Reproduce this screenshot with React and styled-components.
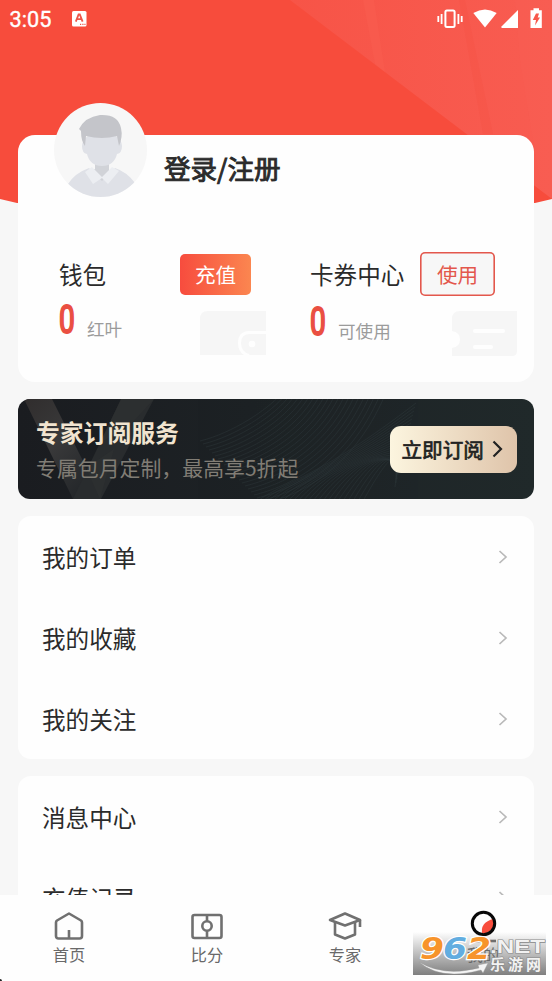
import React from 'react';
import styled, { createGlobalStyle, ThemeProvider } from 'styled-components';

const theme = {
  color: {
    red: '#f74c3c',
    text: '#2b2b2b',
    muted: '#9b9b9b',
    nav: '#696969',
    page: '#f7f7f7',
    card: '#fefefe',
  },
  font: "'Noto Sans CJK SC', 'Noto Sans', sans-serif",
};

const GlobalStyle = createGlobalStyle`
  * {
    box-sizing: border-box;
  }

  body {
    margin: 0;
    overflow: hidden;
  }
`;

const StyledScreen = styled.div`
  position: relative;
  display: flex;
  flex-direction: column;
  width: 552px;
  height: 981px;
  overflow: hidden;
  background: ${({ theme }) => theme.color.page};
  color: ${({ theme }) => theme.color.text};
  font-family: ${({ theme }) => theme.font};
`;

const StyledBackdrop = styled.svg`
  position: absolute;
  top: 0;
  left: 0;
`;

const StyledStatusBar = styled.div`
  position: relative;
  flex: none;
  display: flex;
  align-items: center;
  height: 38px;
  padding: 0 9px 0 9.5px;
  color: #fff;
`;

const StyledTime = styled.div`
  width: 62.5px;
  padding-top: 1px;
  font: 400 21.7px/38px Roboto, sans-serif;
  -webkit-text-stroke: 0.4px #fff;
`;

const StyledStatusIcons = styled.svg`
  margin-left: auto;
`;

const StyledContent = styled.div`
  position: relative;
  flex: 1;
  min-height: 0;
  display: flex;
  flex-direction: column;
  gap: 17px;
  padding: 97px 18px 0;
  overflow: hidden;
`;

const StyledCard = styled.div`
  flex: none;
  height: ${({ height }) => height}px;
  border-radius: ${({ radius }) => radius || 13}px;
  background: ${({ theme }) => theme.color.card};
`;

const StyledAccount = styled.div`
  display: flex;
  height: 94px;
  margin: -32px 0 55px;
  padding-left: 36px;
`;

const StyledAccountName = styled.div`
  margin: 45px 0 0 17px;
  font-size: 26.5px;
  font-weight: 400;
  line-height: 40px;
  -webkit-text-stroke: 0.9px ${({ theme }) => theme.color.text};
`;

const StyledPanels = styled.div`
  display: flex;
  gap: 44px;
  padding-left: 41px;
`;

const StyledPanel = styled.div`
  width: 207px;
`;

const StyledPanelHead = styled.div`
  display: flex;
  align-items: center;
  justify-content: space-between;
  height: 44px;
  padding-right: ${({ inset }) => inset}px;
  font-size: 23.6px;
  white-space: nowrap;
`;

const StyledButton = styled.button`
  display: flex;
  align-items: center;
  justify-content: center;
  width: ${({ outlined }) => (outlined ? 75 : 71)}px;
  height: ${({ outlined }) => (outlined ? 44 : 41)}px;
  padding: 0;
  border: 0;
  box-shadow: ${({ outlined }) => (outlined ? 'inset 0 0 0 1.6px #e3574c' : 'none')};
  border-radius: 5px;
  background: ${({ outlined }) => (outlined ? '#f7f7f7' : 'linear-gradient(90deg, #f74c3e, #fb8650)')};
  color: ${({ outlined }) => (outlined ? '#e3574c' : '#fff')};
  font: 400 20.6px/30px ${({ theme }) => theme.font};
`;

const StyledPanelBody = styled.div`
  display: flex;
  align-items: flex-start;
  height: 62px;
`;

const StyledCount = styled.div`
  width: 14px;
  height: 30px;
  margin-top: ${({ lowered }) => (lowered ? 10.5 : 9)}px;
  color: #ea4f42;
  font: 400 39px/30px Roboto, sans-serif;
  -webkit-text-stroke: 2px #ea4f42;
  transform: scaleX(0.72);
  transform-origin: 0 50%;
`;

const StyledUnit = styled.div`
  margin: ${({ lowered }) => (lowered ? 21.5 : 20)}px auto 0 14px;
  color: ${({ theme }) => theme.color.muted};
  font-size: 17.6px;
  line-height: 26px;
`;

const StyledPanelArt = styled.svg`
  flex: none;
  margin-top: 15px;
`;

const StyledBanner = styled.div`
  position: relative;
  flex: none;
  display: flex;
  align-items: center;
  justify-content: space-between;
  height: 100px;
  padding: 0 17px 0 18px;
  border-radius: 12px;
  overflow: hidden;
  background: linear-gradient(90deg, #1a1c20, #1d2225 45%, #20292a);
`;

const StyledBannerArt = styled.svg`
  position: absolute;
  top: 0;
  left: 0;
`;

const StyledBannerText = styled.div`
  position: relative;
  color: #817d75;
  font-size: 20.9px;
  line-height: 34px;
  white-space: nowrap;
`;

const StyledBannerTitle = styled.div`
  color: #f1e4d0;
  font-size: 23.8px;
  font-weight: 700;
  line-height: 36px;
`;

const StyledSubscribe = styled.button`
  position: relative;
  display: flex;
  align-items: center;
  gap: 8px;
  width: 127px;
  height: 47px;
  padding: 0 0 0 11.5px;
  border: 0;
  border-radius: 11px;
  background: linear-gradient(90deg, #fcf5df, #dfc4aa);
  color: #222;
  font: 400 20.6px/30px ${({ theme }) => theme.font};
  -webkit-text-stroke: 0.7px #222;
  white-space: nowrap;
`;

const StyledRow = styled.div`
  display: flex;
  align-items: center;
  justify-content: space-between;
  height: 81px;
  padding: 1px 26px 0 24px;
  font-size: 23.6px;
`;

const StyledNav = styled.div`
  position: relative;
  flex: none;
  display: flex;
  height: 86px;
  background: #fefefe;
`;

const StyledNavItem = styled.div`
  flex: 1;
  display: flex;
  flex-direction: column;
  align-items: center;
  padding-top: 15px;
  color: ${({ theme }) => theme.color.nav};
  font-size: 16.2px;
  line-height: 23px;
`;

const StyledWatermark = styled.div`
  position: absolute;
  right: 6px;
  bottom: 6px;
  width: 133px;
  height: 43px;
  background: linear-gradient(rgba(120, 120, 120, 0), rgba(105, 105, 105, 0.85));

  svg {
    display: block;
  }
`;

const StyledCorner = styled.div`
  position: absolute;
  left: 0;
  bottom: 0;
  width: 2px;
  height: 2px;
  border-radius: 0 2px 0 0;
  background: #222;
`;

const Backdrop = () => (
  <StyledBackdrop width="552" height="206" viewBox="0 0 552 206">
    <defs>
      <linearGradient id="shine" x1="0" y1="0" x2="1" y2="0">
        <stop offset="0" stopColor="#f75447" />
        <stop offset="1" stopColor="#f85c51" />
      </linearGradient>
    </defs>
    <path d="M0 0H552V199L535 203H17L0 199Z" fill="#f74c3c" />
    <path d="M290 0H552V199Z" fill="url(#shine)" />
    <path d="M363 0H374L385 72L375 64Z" fill="#f95d50" opacity=".5" />
    <path d="M459 0H465L493 134H483Z" fill="#f55245" opacity=".4" />
    <path d="M520 60L528 110L540 180H552V0H515Z" fill="#fa6055" opacity=".3" />
  </StyledBackdrop>
);

const StatusBar = () => (
  <StyledStatusBar>
    <StyledTime>3:05</StyledTime>
    <svg width="15" height="19" viewBox="0 0 15 19">
      <rect x="0" y="1" width="14.5" height="15.5" rx="1.5" fill="#fff" />
      <path d="M3.8 11.6 6.6 4.4H7.8L10.6 11.6M5 9.2H9.4" fill="none" stroke="#ee5549" strokeWidth="1.8" />
      <path d="M8 14.3H9.2M10.3 14.3H11.5M12.4 14.3H13.5" stroke="#ee5549" strokeWidth="1.3" />
    </svg>
    <StyledStatusIcons width="106" height="24" viewBox="0 0 106 24">
      <rect x="8.4" y="3.5" width="9.2" height="16.4" rx="1.5" fill="none" stroke="#fff" strokeWidth="2" />
      <path d="M1.3 9V15M4.6 7V17M21.4 7V17M24.7 9V15" stroke="#fff" strokeWidth="1.8" />
      <path d="M36.3 6Q48 -1 59.7 6L48 20.5Z" fill="#fff" />
      <path d="M81 3V21H64.5V19.5Z" fill="#fff" />
      <path d="M93.5 3.2H96.5V1.2H102V3.2H104.8V21H93.5Z" fill="#fff" />
      <path d="M99 6.5H102L100.7 10.5H103L98 18.5L99 13H95.8Z" fill="#f8584b" />
    </StyledStatusIcons>
  </StyledStatusBar>
);

const Avatar = () => (
  <svg width="93" height="94" viewBox="0 0 93 94">
    <defs>
      <clipPath id="face">
        <ellipse cx="46.5" cy="47" rx="46.5" ry="47" />
      </clipPath>
    </defs>
    <g clipPath="url(#face)">
      <path d="M0 0H93V94H0Z" fill="#f7f7f7" />
      <path d="M41 57H55V67L62 70L48 82L33 70L41 66Z" fill="#d1d3d8" />
      <path d="M14 81Q21 70 35 65L48 78L61 65Q73 69 81 80L75 96H18Z" fill="#dfe1e7" />
      <path d="M38 64L48 74L58 64L65 68L54 81L48 75L39 81L31 69Z" fill="#eceef2" />
      <path d="M28 43Q29 30 48 30Q67 30 68 43Q68 50 63 51Q60 63 48 63Q36 63 33 51Q28 50 28 43Z" fill="#dfe1e7" />
      <path d="M25 26Q31 14 46 12Q64 11 67 25Q69 34 65 43L63 33Q48 37 32 33L31 43Q27 38 27 28Z" fill="#c4c5ca" />
    </g>
  </svg>
);

const WalletArt = () => (
  <StyledPanelArt width="66" height="44" viewBox="0 0 66 44">
    <path d="M8 0H66V44H0V8Q0 0 8 0Z" fill="#f6f6f6" />
    <path d="M66 21.5H49Q39.5 22 39.5 32Q39.5 42 49 44.5" fill="none" stroke="#fefefe" strokeWidth="3" />
    <circle cx="52" cy="33" r="3.3" fill="#fefefe" />
  </StyledPanelArt>
);

const CouponArt = () => (
  <StyledPanelArt width="65" height="45" viewBox="0 0 65 45">
    <path d="M8 0H65V40Q65 45 60 45H0V37Q8 36 8 28.5Q8 21 0 20V8Q0 0 8 0Z" fill="#f6f6f6" />
    <path d="M23 20H51M23 36H39" stroke="#fefefe" strokeWidth="4" strokeLinecap="round" />
  </StyledPanelArt>
);

// flowing contour lines on the dark banner
const waves = Array.from({ length: 22 }, (_, i) => i);

const BannerArt = () => (
  <StyledBannerArt width="516" height="100" viewBox="0 0 516 100">
    <defs>
      <linearGradient id="ribbon" x1="0" y1="0" x2="0.7" y2="1">
        <stop offset="0" stopColor="#302d2d" />
        <stop offset="0.5" stopColor="#39393a" />
        <stop offset="1" stopColor="#24272a" />
      </linearGradient>
    </defs>
    <path d="M6 0H34L66 64L78 100H55Z" fill="url(#ribbon)" />
    <path d="M103 0H136L83 100H55Z" fill="#292c2e" />
    <path d="M103 0L82 44L113 25L136 0M68 69L96 50L82 100" fill="#303233" opacity=".45" />
    <g fill="none" stroke="#344043" strokeWidth=".6" opacity=".6">
      {waves.map((i) => (
        <path
          key={i}
          d={`M${182 + i * 3} ${42 + i * 3}C${215 + i * 3} ${34 + i * 3} ${250 + i * 4} ${10 + i * 3} ${262 + i * 5} -4`}
        />
      ))}
      {waves.map((i) => (
        <path
          key={i}
          d={`M${240 + i * 5} 102C${262 + i * 5} ${84 - i} ${300 + i * 4} ${80 - i * 2} ${398 - i} ${4 + i * 4}`}
        />
      ))}
    </g>
  </StyledBannerArt>
);

const Chevron = () => (
  <svg width="10" height="16" viewBox="0 0 10 16">
    <path d="M1.5 2L8 8L1.5 14" fill="none" stroke="#b9b9b9" strokeWidth="1.7" />
  </svg>
);

const MenuRow = ({ label }) => (
  <StyledRow>
    {label}
    <Chevron />
  </StyledRow>
);

const HomeIcon = () => (
  <g>
    <path d="M16 3.5L28 10.5Q29 11.2 29 12.5V26Q29 28.5 26.5 28.5H5.5Q3 28.5 3 26V12.5Q3 11.2 4 10.5Z" />
    <path d="M16 20V28" />
  </g>
);

const ScoreIcon = () => (
  <g>
    <rect x="1.5" y="5" width="29" height="23" rx="2" />
    <path d="M16 5V11M16 21V28" />
    <circle cx="16" cy="16" r="4.7" />
  </g>
);

const ExpertIcon = () => (
  <g>
    <path d="M1 10L16 3.5L31 10L16 15.5Z" />
    <path d="M6 12V24.5L16 28.5L26 24.5V12M31 10V17" />
  </g>
);

const MineIcon = () => (
  <g>
    <path d="M15.5 24.5Q12 13 27 8.5Q30 20 15.5 24.5Z" fill="#f84d3c" stroke="none" />
    <circle cx="16.5" cy="13.5" r="11.2" stroke="#080808" strokeWidth="3" />
    <path d="M4 31H29" />
  </g>
);

const NavItem = ({ label, icon: Icon }) => (
  <StyledNavItem>
    <svg
      width="34"
      height="33"
      viewBox="-1 0 34 33"
      fill="none"
      stroke="#707070"
      strokeWidth="2.6"
      strokeLinejoin="round"
    >
      <Icon />
    </svg>
    {label}
  </StyledNavItem>
);

const Watermark = () => (
  <StyledWatermark>
    <svg width="133" height="43" viewBox="0 0 133 43" overflow="visible">
      <g
        fontFamily="DejaVu Sans"
        fontWeight="700"
        fontStyle="italic"
        fontSize="31"
        stroke="#fff"
        strokeWidth="2.4"
        paintOrder="stroke"
      >
        <text x="7" y="26.5" textLength="24" lengthAdjust="spacingAndGlyphs" fill="#f7942b">9</text>
        <text x="30" y="26.5" textLength="24" lengthAdjust="spacingAndGlyphs" fill="#62ade0">6</text>
        <text x="54" y="26.5" textLength="24" lengthAdjust="spacingAndGlyphs" fill="#f7942b">2</text>
      </g>
      <path d="M6 30Q30 45 66 36L65 33L75 31L70 41L68 38Q28 49 6 30Z" fill="#f4f4f4" stroke="#999" strokeWidth=".4" />
      <g fill="#f2f2f2" stroke="#888" strokeWidth="1.2" paintOrder="stroke" fontWeight="700">
        <text x="77" y="21" fontFamily="Liberation Sans" fontSize="19" textLength="55" lengthAdjust="spacingAndGlyphs">
          .NET
        </text>
        <text x="77" y="38" fontFamily="Noto Sans CJK SC" fontSize="15" textLength="51">
          乐游网
        </text>
      </g>
    </svg>
  </StyledWatermark>
);

const App = () => (
  <ThemeProvider theme={theme}>
    <GlobalStyle />
    <StyledScreen>
      <Backdrop />
      <StatusBar />
      <StyledContent>
        <StyledCard height={247} radius={17}>
          <StyledAccount>
            <Avatar />
            <StyledAccountName>登录/注册</StyledAccountName>
          </StyledAccount>
          <StyledPanels>
            <StyledPanel>
              <StyledPanelHead inset={15}>
                钱包
                <StyledButton>充值</StyledButton>
              </StyledPanelHead>
              <StyledPanelBody>
                <StyledCount>0</StyledCount>
                <StyledUnit>红叶</StyledUnit>
                <WalletArt />
              </StyledPanelBody>
            </StyledPanel>
            <StyledPanel>
              <StyledPanelHead inset={22}>
                卡券中心
                <StyledButton outlined>使用</StyledButton>
              </StyledPanelHead>
              <StyledPanelBody>
                <StyledCount lowered>0</StyledCount>
                <StyledUnit lowered>可使用</StyledUnit>
                <CouponArt />
              </StyledPanelBody>
            </StyledPanel>
          </StyledPanels>
        </StyledCard>
        <StyledBanner>
          <BannerArt />
          <StyledBannerText>
            <StyledBannerTitle>专家订阅服务</StyledBannerTitle>
            专属包月定制，最高享5折起
          </StyledBannerText>
          <StyledSubscribe>
            立即订阅
            <svg width="11" height="18" viewBox="0 0 11 18">
              <path d="M1.5 1.5L9 9L1.5 16.5" fill="none" stroke="#222" strokeWidth="2.2" />
            </svg>
          </StyledSubscribe>
        </StyledBanner>
        <StyledCard height={243}>
          <MenuRow label="我的订单" />
          <MenuRow label="我的收藏" />
          <MenuRow label="我的关注" />
        </StyledCard>
        <StyledCard height={243}>
          <MenuRow label="消息中心" />
          <MenuRow label="充值记录" />
        </StyledCard>
      </StyledContent>
      <StyledNav>
        <NavItem label="首页" icon={HomeIcon} />
        <NavItem label="比分" icon={ScoreIcon} />
        <NavItem label="专家" icon={ExpertIcon} />
        <NavItem label="我的" icon={MineIcon} />
        <Watermark />
        <StyledCorner />
      </StyledNav>
    </StyledScreen>
  </ThemeProvider>
);

export default App;
